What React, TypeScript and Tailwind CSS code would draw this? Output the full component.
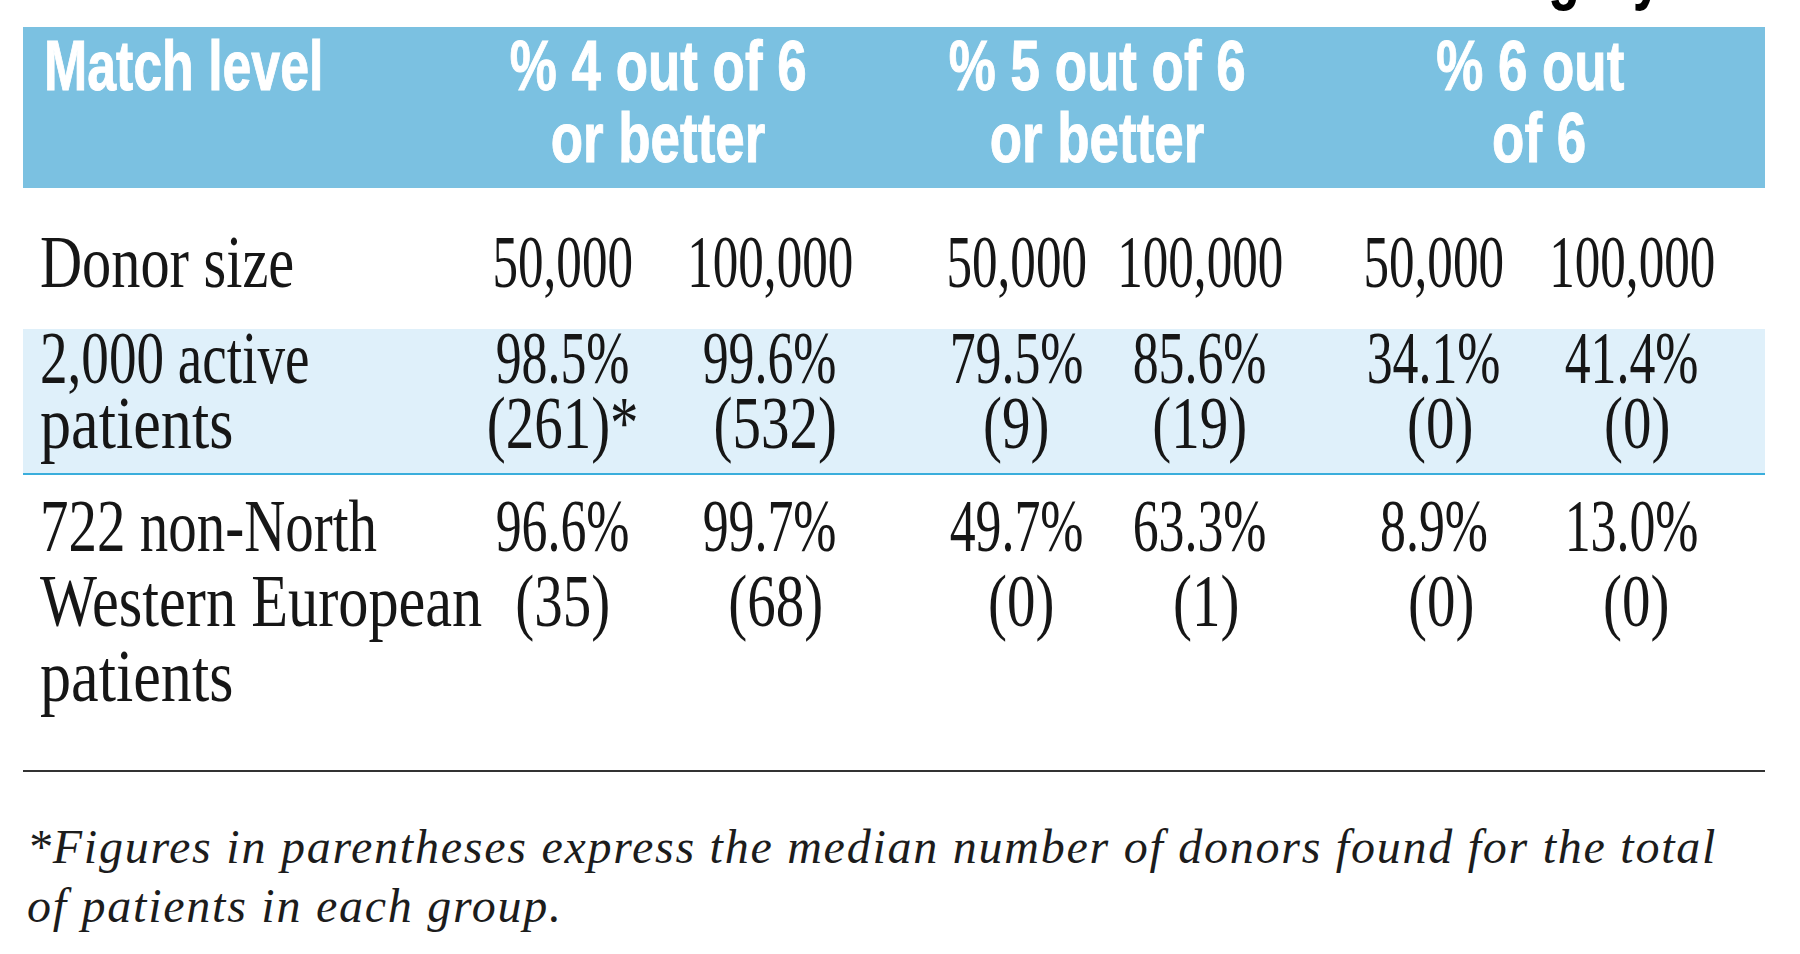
import React from "react";

type Line = { t: string; c?: string };
type Row = { label: Line[]; cells: Line[][] };

const colClasses = [
  "w-[206px]",
  "w-[208px]",
  "w-[183px] ml-[51px]",
  "w-[184px]",
  "w-[198px] ml-[43px]",
  "w-[198px]",
];

const donorSizes = ["50,000", "100,000", "50,000", "100,000", "50,000", "100,000"];

const row2: Row = {
  label: [
    { t: "2,000 active", c: "scale-x-[0.745]" },
    { t: "patients", c: "scale-x-[0.84]" },
  ],
  cells: [
    [{ t: "98.5%" }, { t: "(261)*" }],
    [{ t: "99.6%" }, { t: "(532)", c: "ml-[10px]" }],
    [{ t: "79.5%" }, { t: "(9)" }],
    [{ t: "85.6%" }, { t: "(19)" }],
    [{ t: "34.1%" }, { t: "(0)", c: "ml-[12px]" }],
    [{ t: "41.4%" }, { t: "(0)", c: "ml-[10px]" }],
  ],
};

const row3: Row = {
  label: [
    { t: "722 non-North", c: "scale-x-[0.77]" },
    { t: "Western European", c: "scale-x-[0.815]" },
    { t: "patients", c: "scale-x-[0.84]" },
  ],
  cells: [
    [{ t: "96.6%" }, { t: "(35)" }],
    [{ t: "99.7%" }, { t: "(68)", c: "ml-[12px]" }],
    [{ t: "49.7%" }, { t: "(0)", c: "ml-[10px]" }],
    [{ t: "63.3%" }, { t: "(1)", c: "ml-[12px]" }],
    [{ t: "8.9%" }, { t: "(0)", c: "ml-[14px]" }],
    [{ t: "13.0%" }, { t: "(0)", c: "ml-[8px]" }],
  ],
};

function Label({ lines }: { lines: Line[] }) {
  return (
    <div className="w-[437px] pl-[17px] flex flex-col items-start">
      {lines.map((l, i) => (
        <span key={i} className={`inline-block whitespace-nowrap origin-left ${l.c ?? ""}`}>
          {l.t}
        </span>
      ))}
    </div>
  );
}

function Cells({ cells }: { cells: Line[][] }) {
  return (
    <>
      {cells.map((lines, ci) => (
        <div key={ci} className={`${colClasses[ci]} flex flex-col items-center`}>
          {lines.map((l, i) => (
            <span
              key={i}
              className={`inline-block whitespace-nowrap ${i === 0 ? "scale-x-[0.7]" : "scale-x-[0.77]"} ${l.c ?? ""}`}
            >
              {l.t}
            </span>
          ))}
        </div>
      ))}
    </>
  );
}

function HeadLine({ children, extra = "" }: { children: React.ReactNode; extra?: string }) {
  return <span className={`inline-block whitespace-nowrap scale-x-[0.745] ${extra}`}>{children}</span>;
}

export default function App() {
  return (
    <div className="w-[1800px] h-[954px] overflow-hidden bg-white text-[#161616]">
      {/* cut-off caption above the table */}
      <div className="h-[27px] overflow-hidden flex justify-end pr-[138px]">
        <span className="inline-block -mt-[64px] origin-right scale-x-[0.74] whitespace-nowrap font-['Liberation_Sans',Arial,sans-serif] font-bold text-[71px] leading-[71px] text-black">
          category
        </span>
      </div>

      <div className="ml-[23px] w-[1742px]">
        {/* header band */}
        <div className="h-[161px] bg-[#7bc1e1] pt-[3px] flex text-white font-['Liberation_Sans',Arial,sans-serif] font-bold text-[71px] leading-[72px] [-webkit-text-stroke:1px_white]">
          <div className="w-[437px] pl-[21px]">
            <span className="inline-block whitespace-nowrap origin-left scale-x-[0.73]">Match level</span>
          </div>
          <div className="w-[396px] flex flex-col items-center">
            <HeadLine>% 4 out of 6</HeadLine>
            <HeadLine>or better</HeadLine>
          </div>
          <div className="w-[482px] flex flex-col items-center">
            <HeadLine>% 5 out of 6</HeadLine>
            <HeadLine>or better</HeadLine>
          </div>
          <div className="w-[384px] flex flex-col items-center">
            <HeadLine>% 6 out</HeadLine>
            <HeadLine extra="ml-[18px]">of 6</HeadLine>
          </div>
        </div>

        <div className="font-['Liberation_Serif','Times_New_Roman',serif] text-[74px]">
          {/* Donor size row */}
          <div className="h-[141px] pt-[37px] flex leading-[74px]">
            <Label lines={[{ t: "Donor size", c: "scale-x-[0.788]" }]} />
            {donorSizes.map((d, i) => (
              <div key={i} className={`${colClasses[i]} flex flex-col items-center`}>
                <span className="inline-block whitespace-nowrap scale-x-[0.69]">{d}</span>
              </div>
            ))}
          </div>

          {/* 2,000 active patients row */}
          <div className="h-[146px] flex flex-col bg-[#dff0fa] border-b-2 border-[#3aaedc]">
            <div className="-mt-[3px] flex leading-[65px]">
              <Label lines={row2.label} />
              <Cells cells={row2.cells} />
            </div>
          </div>

          {/* 722 non-North Western European patients row */}
          <div className="pt-[14px] flex leading-[75px]">
            <Label lines={row3.label} />
            <Cells cells={row3.cells} />
          </div>
        </div>

        <div className="mt-[56px] h-[2px] bg-[#333333]" />

        <div className="mt-[45px] pl-[4px] font-['Liberation_Serif','Times_New_Roman',serif] italic text-[48px] leading-[59px] tracking-[1.75px] text-[#1c1c1c]">
          <div className="whitespace-nowrap">
            *Figures in parentheses express the median number of donors found for the total
          </div>
          <div className="whitespace-nowrap">of patients in each group.</div>
        </div>
      </div>
    </div>
  );
}
